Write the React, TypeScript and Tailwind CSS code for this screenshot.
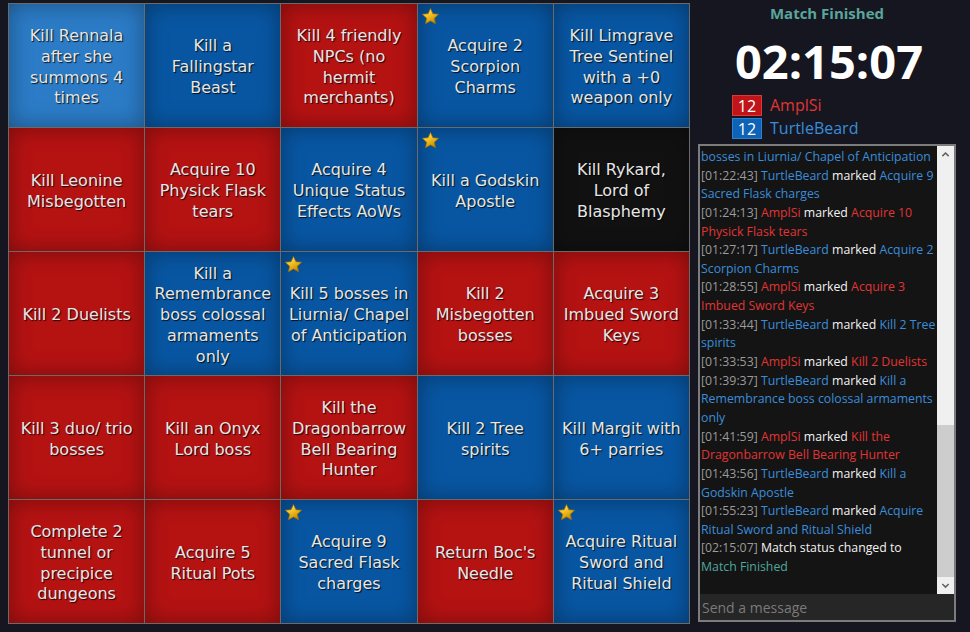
import React from "react";

type Cell = { t: string; c: "r" | "b" | "k" | "lb"; s?: boolean };

const cells: Cell[] = [
  { t: "Kill Rennala after she summons 4 times", c: "lb" },
  { t: "Kill a Fallingstar Beast", c: "b" },
  { t: "Kill 4 friendly NPCs (no hermit merchants)", c: "r" },
  { t: "Acquire 2 Scorpion Charms", c: "b", s: true },
  { t: "Kill Limgrave Tree Sentinel with a +0 weapon only", c: "b" },
  { t: "Kill Leonine Misbegotten", c: "r" },
  { t: "Acquire 10 Physick Flask tears", c: "r" },
  { t: "Acquire 4 Unique Status Effects AoWs", c: "b" },
  { t: "Kill a Godskin Apostle", c: "b", s: true },
  { t: "Kill Rykard, Lord of Blasphemy", c: "k" },
  { t: "Kill 2 Duelists", c: "r" },
  { t: "Kill a Remembrance boss colossal armaments only", c: "b" },
  { t: "Kill 5 bosses in Liurnia/ Chapel of Anticipation", c: "b", s: true },
  { t: "Kill 2 Misbegotten bosses", c: "r" },
  { t: "Acquire 3 Imbued Sword Keys", c: "r" },
  { t: "Kill 3 duo/ trio bosses", c: "r" },
  { t: "Kill an Onyx Lord boss", c: "r" },
  { t: "Kill the Dragonbarrow Bell Bearing Hunter", c: "r" },
  { t: "Kill 2 Tree spirits", c: "b" },
  { t: "Kill Margit with 6+ parries", c: "b" },
  { t: "Complete 2 tunnel or precipice dungeons", c: "r" },
  { t: "Acquire 5 Ritual Pots", c: "r" },
  { t: "Acquire 9 Sacred Flask charges", c: "b", s: true },
  { t: "Return Boc's Needle", c: "r" },
  { t: "Acquire Ritual Sword and Ritual Shield", c: "b", s: true },
];

const bgClass: Record<Cell["c"], string> = {
  r: "bg-[#b51212]",
  b: "bg-[#0856a2]",
  k: "bg-[#111111]",
  lb: "bg-[#2b7bc6]",
};

type Msg =
  | { kind: "partial"; text: string }
  | { kind: "mark"; time: string; who: "r" | "b"; text: string }
  | { kind: "status"; time: string };

const msgs: Msg[] = [
  { kind: "partial", text: "bosses in Liurnia/ Chapel of Anticipation" },
  { kind: "mark", time: "01:22:43", who: "b", text: "Acquire 9 Sacred Flask charges" },
  { kind: "mark", time: "01:24:13", who: "r", text: "Acquire 10 Physick Flask tears" },
  { kind: "mark", time: "01:27:17", who: "b", text: "Acquire 2 Scorpion Charms" },
  { kind: "mark", time: "01:28:55", who: "r", text: "Acquire 3 Imbued Sword Keys" },
  { kind: "mark", time: "01:33:44", who: "b", text: "Kill 2 Tree spirits" },
  { kind: "mark", time: "01:33:53", who: "r", text: "Kill 2 Duelists" },
  { kind: "mark", time: "01:39:37", who: "b", text: "Kill a Remembrance boss colossal armaments only" },
  { kind: "mark", time: "01:41:59", who: "r", text: "Kill the Dragonbarrow Bell Bearing Hunter" },
  { kind: "mark", time: "01:43:56", who: "b", text: "Kill a Godskin Apostle" },
  { kind: "mark", time: "01:55:23", who: "b", text: "Acquire Ritual Sword and Ritual Shield" },
  { kind: "status", time: "02:15:07" },
];

function Star() {
  return (
    <svg viewBox="0 0 24 24" className="absolute left-[3px] top-[3px] h-[19px] w-[19px]">
      <defs>
        <linearGradient id="sg" x1="0" y1="0" x2="0.6" y2="1">
          <stop offset="0" stopColor="#fff3a0" />
          <stop offset="0.45" stopColor="#f7c928" />
          <stop offset="1" stopColor="#c98a00" />
        </linearGradient>
      </defs>
      <path
        d="M12 1.8l3.05 6.6 7.2.8-5.35 4.9 1.5 7.1L12 17.6l-6.4 3.6 1.5-7.1L1.75 9.2l7.2-.8z"
        fill="url(#sg)"
        stroke="#9a6a00"
        strokeWidth="0.9"
        strokeLinejoin="round"
      />
    </svg>
  );
}

export default function App() {
  const red = "text-[#e03535]";
  const blue = "text-[#3a8ddb]";
  return (
    <div className="flex h-[632px] w-[970px] gap-[8px] overflow-hidden bg-[#15161f] pl-[8px] pt-[3px]">
      <div
        className="grid h-[621px] w-[682px] grid-cols-5 grid-rows-5 gap-px bg-[#6a6a6a] p-px"
        style={{ fontFamily: '"DejaVu Sans", sans-serif' }}
      >
        {cells.map((c, i) => (
          <div
            key={i}
            className={`relative flex items-center justify-center px-[5px] pt-[4px] text-center text-[16px] leading-[20.7px] text-[#e6e6e6] shadow-[inset_0_0_22px_rgba(0,0,0,0.35)] [text-shadow:1px_1px_1px_rgba(0,0,0,0.85)] ${bgClass[c.c]}`}
          >
            {c.s && <Star />}
            <span>{c.t}</span>
          </div>
        ))}
      </div>

      <div
        className="flex w-[258px] flex-col"
        style={{ fontFamily: '"Open Sans", sans-serif' }}
      >
        <div className="text-center text-[15px] font-bold leading-[20px] text-[#5aa59c]">
          Match Finished
        </div>
        <div className="mt-[10px] pl-[4px] text-center text-[47px] font-bold leading-[56px] text-white">
          02:15:07
        </div>
        <div className="mt-[6px] flex flex-col gap-[2px] pl-[34px]">
          <div className="flex items-center gap-[8px]">
            <div className="flex h-[21px] w-[30px] items-center justify-center border border-[#d83a3a] bg-[#c01418] text-[16px] leading-none text-white">
              12
            </div>
            <span className={`text-[16px] leading-[21px] ${red}`}>AmplSi</span>
          </div>
          <div className="flex items-center gap-[8px]">
            <div className="flex h-[21px] w-[30px] items-center justify-center border border-[#2f7fd0] bg-[#0f63b6] text-[16px] leading-none text-white">
              12
            </div>
            <span className={`text-[16px] leading-[21px] ${blue}`}>TurtleBeard</span>
          </div>
        </div>

        <div className="mt-[5px] flex h-[478px] flex-col border-2 border-[#7c7c7c] bg-[#141414]">
          <div className="flex min-h-0 flex-1">
            <div className="min-w-0 flex-1 overflow-hidden pl-[1px] pt-[2px] text-[12.3px] leading-[18.64px]">
              {msgs.map((m, i) => {
                if (m.kind === "partial")
                  return (
                    <div key={i} className={blue}>
                      {m.text}
                    </div>
                  );
                if (m.kind === "status")
                  return (
                    <div key={i}>
                      <span className="text-[#9b9b9b]">[{m.time}]</span>{" "}
                      <span className="text-[#f2f2f2]">Match status changed to</span>{" "}
                      <span className="text-[#4fa89a]">Match Finished</span>
                    </div>
                  );
                const col = m.who === "r" ? red : blue;
                return (
                  <div key={i}>
                    <span className="text-[#9b9b9b]">[{m.time}]</span>{" "}
                    <span className={col}>{m.who === "r" ? "AmplSi" : "TurtleBeard"}</span>{" "}
                    <span className="text-[#f2f2f2]">marked</span>{" "}
                    <span className={col}>{m.text}</span>
                  </div>
                );
              })}
            </div>
            <div className="flex w-[17px] flex-col bg-[#f0f0f0]">
              <div className="flex h-[17px] items-center justify-center">
                <svg viewBox="0 0 10 10" className="h-[9px] w-[9px]">
                  <path d="M1.5 6.8L5 3.3l3.5 3.5" fill="none" stroke="#606060" strokeWidth="1.6" />
                </svg>
              </div>
              <div className="flex-1" />
              <div className="h-[152px] bg-[#cdcdcd]" />
              <div className="flex h-[17px] items-center justify-center">
                <svg viewBox="0 0 10 10" className="h-[9px] w-[9px]">
                  <path d="M1.5 3.3L5 6.8l3.5-3.5" fill="none" stroke="#606060" strokeWidth="1.6" />
                </svg>
              </div>
            </div>
          </div>
          <div className="flex h-[26px] items-center bg-[#262626] pl-[2px] text-[14px] text-[#7a7a7a]">
            Send a message
          </div>
        </div>
      </div>
    </div>
  );
}
